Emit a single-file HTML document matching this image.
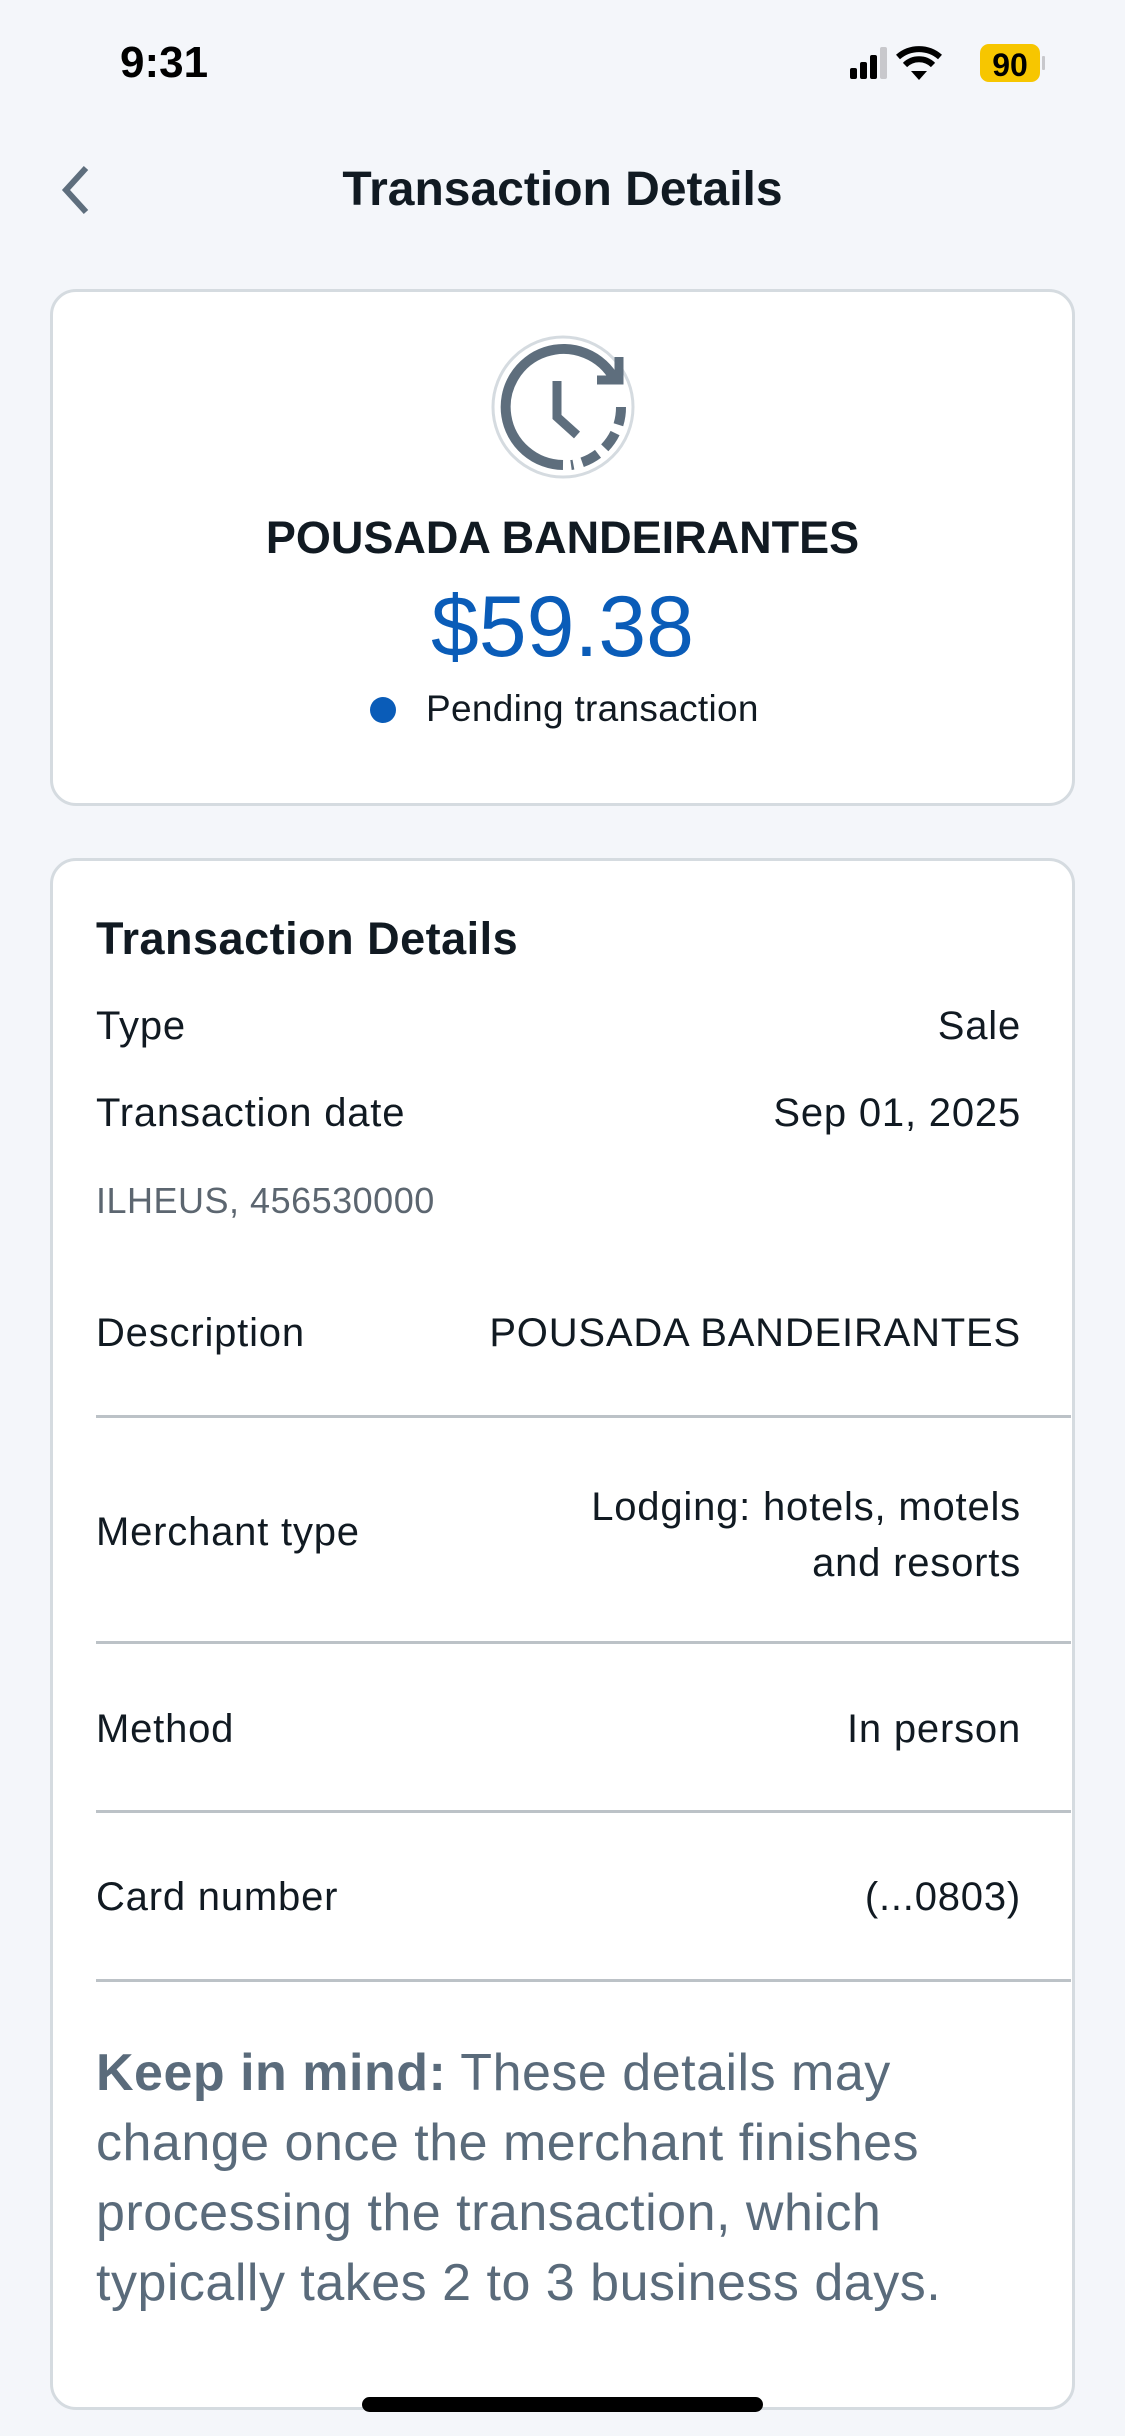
<!DOCTYPE html>
<html><head><meta charset="utf-8"><style>
*{margin:0;padding:0;box-sizing:border-box}
body{width:1125px;height:2436px;background:#f4f6fa;font-family:"Liberation Sans",sans-serif;position:relative;overflow:hidden;color:#111a22}
.a{position:absolute;white-space:nowrap}
.card{position:absolute;left:50px;width:1025px;background:#fff;border:3px solid #d5dbe0;border-radius:26px}
.row{position:absolute;left:96px;right:104px;font-size:40px;letter-spacing:0.8px;color:#111a22}
.row .r{position:absolute;right:0;top:0;text-align:right}
.line{position:absolute;left:96px;width:975px;height:3px;background:#bcc2c7}
</style></head><body>
<div class="a" style="left:120px;top:38px;font-size:44px;font-weight:bold;color:#000">9:31</div>
<svg class="a" style="left:848px;top:42px" width="210" height="44" viewBox="0 0 210 44">
<rect x="2" y="26" width="7" height="11" rx="2" fill="#000"/>
<rect x="12" y="20" width="7" height="17" rx="2" fill="#000"/>
<rect x="22" y="13" width="7" height="24" rx="2" fill="#000"/>
<rect x="32" y="5" width="7" height="32" rx="2" fill="#c8c8cc"/>
<path d="M50 15a32 32 0 0 1 42 0" stroke="#000" stroke-width="6" fill="none"/>
<path d="M57 23a20 20 0 0 1 28 0" stroke="#000" stroke-width="6" fill="none"/>
<path d="M63 29l8 9 8-9z" fill="#000"/>
<rect x="132" y="2" width="60" height="38" rx="9" fill="#f7c600"/>
<rect x="194" y="14" width="3" height="14" rx="1" fill="#c8c8cc"/>
<text x="162" y="34" text-anchor="middle" font-family="Liberation Sans" font-weight="bold" font-size="32" fill="#000">90</text>
</svg>
<svg class="a" style="left:58px;top:164px" width="36" height="52" viewBox="0 0 36 52"><path d="M28 4L8 26l20 22" stroke="#5e6e7d" stroke-width="6" fill="none"/></svg>
<div class="a" style="left:0;width:1125px;top:162px;text-align:center;font-size:48px;font-weight:bold;color:#111a22">Transaction Details</div>

<div class="card" style="top:289px;height:517px"></div>
<svg class="a" style="left:491px;top:335px" width="144" height="144" viewBox="0 0 144 144">
<circle cx="72" cy="72" r="70" fill="none" stroke="#d5dbe0" stroke-width="3"/>
<path d="M72 130A58 58 0 1 1 124 45" stroke="#5e6e7d" stroke-width="10" fill="none"/>
<path d="M106 45h22V22" stroke="#5e6e7d" stroke-width="9" fill="none"/>
<path d="M130 72A58 58 0 0 1 80 130" stroke="#5e6e7d" stroke-width="10" fill="none" stroke-dasharray="18 9"/>
<path d="M66 46v36l20 18" stroke="#5e6e7d" stroke-width="9" fill="none"/>
</svg>
<div class="a" style="left:0;width:1125px;top:512px;text-align:center;font-size:45px;font-weight:bold;color:#111a22">POUSADA BANDEIRANTES</div>
<div class="a" style="left:0;width:1125px;top:578px;text-align:center;font-size:86px;color:#0a5cb8">$59.38</div>
<div class="a" style="left:370px;top:697px;width:26px;height:26px;border-radius:50%;background:#0a5cb8"></div>
<div class="a" style="left:426px;top:688px;font-size:37px;letter-spacing:0.3px;color:#111a22">Pending transaction</div>

<div class="card" style="top:858px;height:1552px"></div>
<div class="a" style="left:96px;top:913px;font-size:45px;font-weight:bold;letter-spacing:0.5px">Transaction Details</div>
<div class="row" style="top:1004px">Type<span class="r">Sale</span></div>
<div class="row" style="top:1091px">Transaction date<span class="r">Sep 01, 2025</span></div>
<div class="a" style="left:96px;top:1180px;font-size:36px;letter-spacing:0.5px;color:#5c6670">ILHEUS, 456530000</div>
<div class="row" style="top:1311px">Description<span class="r">POUSADA BANDEIRANTES</span></div>
<div class="line" style="top:1415px"></div>
<div class="row" style="top:1510px">Merchant type</div>
<div class="row" style="top:1479px"><span class="r" style="line-height:56px">Lodging: hotels, motels<br>and resorts</span></div>
<div class="line" style="top:1641px"></div>
<div class="row" style="top:1707px">Method<span class="r">In person</span></div>
<div class="line" style="top:1810px"></div>
<div class="row" style="top:1875px">Card number<span class="r">(...0803)</span></div>
<div class="line" style="top:1979px"></div>
<div class="a" style="left:96px;top:2038px;font-size:52px;line-height:70px;letter-spacing:0.5px;color:#5a6b7b"><b>Keep in mind:</b> These details may<br>change once the merchant finishes<br>processing the transaction, which<br>typically takes 2 to 3 business days.</div>
<div class="a" style="left:362px;top:2397px;width:401px;height:15px;border-radius:8px;background:#000"></div>
</body></html>
